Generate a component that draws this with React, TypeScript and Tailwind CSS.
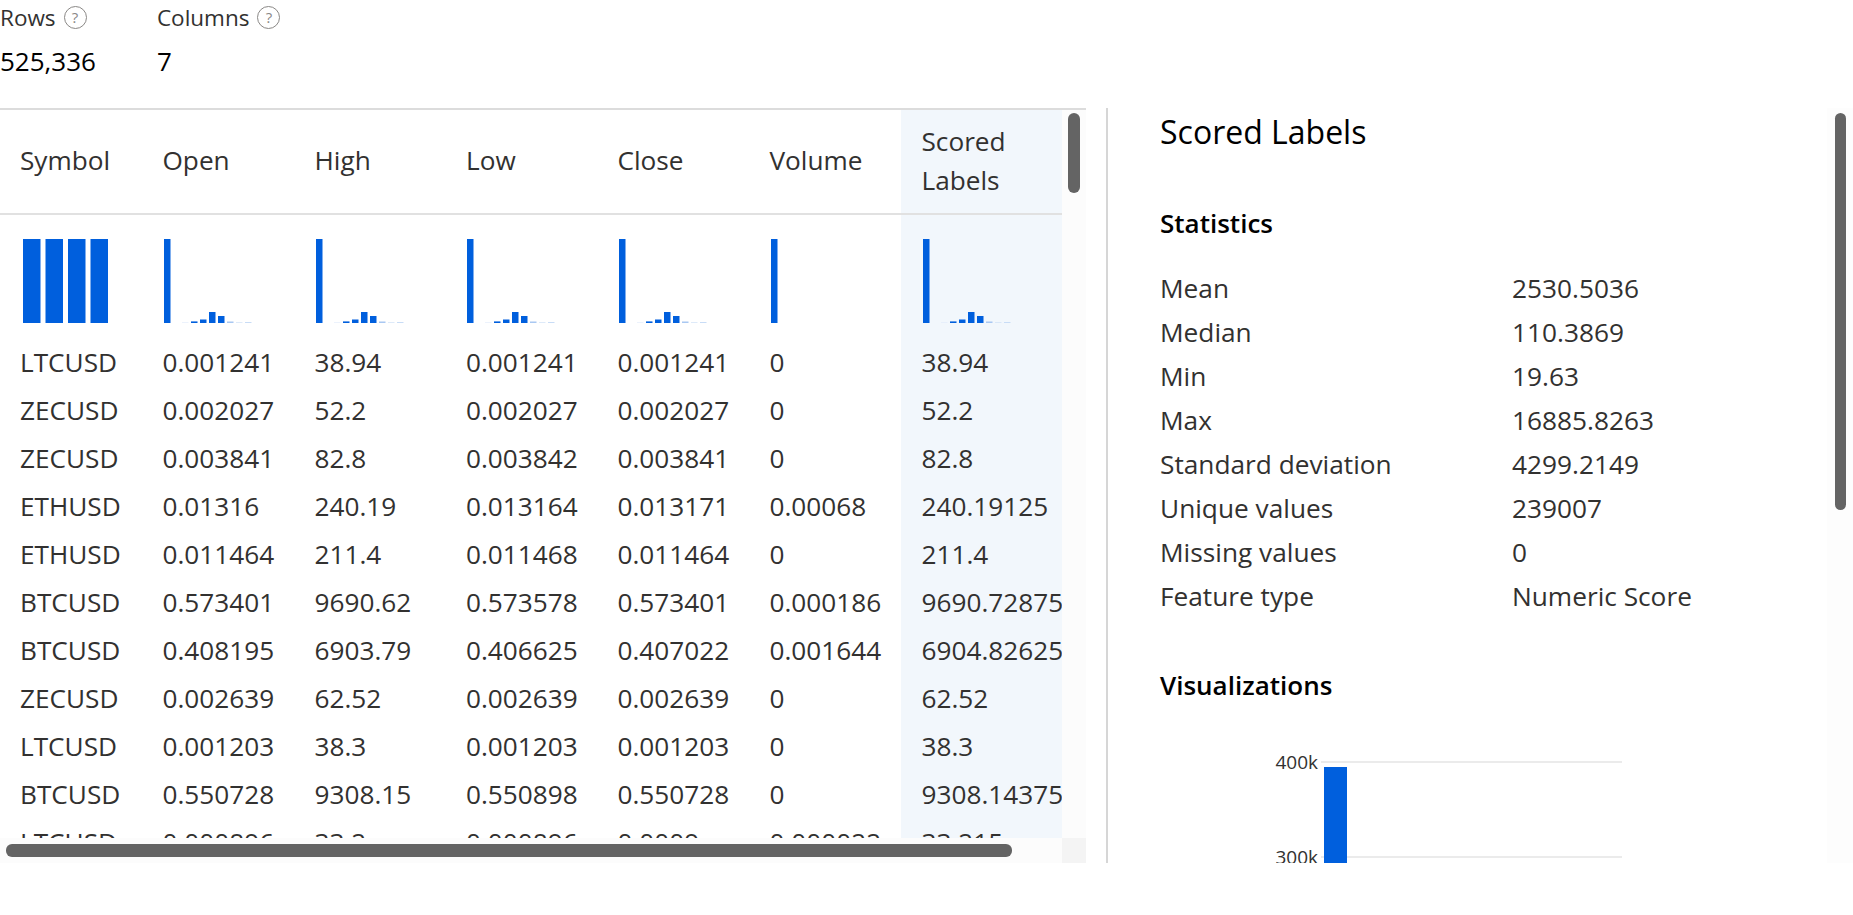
const font = "font-['Open_Sans','Noto_Sans',sans-serif]"

const rows = [
  ["LTCUSD", "0.001241", "38.94", "0.001241", "0.001241", "0", "38.94"],
  ["ZECUSD", "0.002027", "52.2", "0.002027", "0.002027", "0", "52.2"],
  ["ZECUSD", "0.003841", "82.8", "0.003842", "0.003841", "0", "82.8"],
  ["ETHUSD", "0.01316", "240.19", "0.013164", "0.013171", "0.00068", "240.19125"],
  ["ETHUSD", "0.011464", "211.4", "0.011468", "0.011464", "0", "211.4"],
  ["BTCUSD", "0.573401", "9690.62", "0.573578", "0.573401", "0.000186", "9690.72875"],
  ["BTCUSD", "0.408195", "6903.79", "0.406625", "0.407022", "0.001644", "6904.82625"],
  ["ZECUSD", "0.002639", "62.52", "0.002639", "0.002639", "0", "62.52"],
  ["LTCUSD", "0.001203", "38.3", "0.001203", "0.001203", "0", "38.3"],
  ["BTCUSD", "0.550728", "9308.15", "0.550898", "0.550728", "0", "9308.14375"],
  ["LTCUSD", "0.000896", "33.2", "0.000896", "0.0009", "0.000022", "33.215"],
]

const stats = [
  ["Mean", "2530.5036"],
  ["Median", "110.3869"],
  ["Min", "19.63"],
  ["Max", "16885.8263"],
  ["Standard deviation", "4299.2149"],
  ["Unique values", "239007"],
  ["Missing values", "0"],
  ["Feature type", "Numeric Score"],
]

const headers = ["Symbol", "Open", "High", "Low", "Close", "Volume"]
const gridCols = "grid grid-cols-[142.5px_152px_151.5px_151.5px_152px_151px_161.5px]"

function HelpIcon() {
  return (
    <span className="ml-2 flex h-[23px] w-[23px] items-center justify-center rounded-full border border-[#8a8886] text-[15px] leading-none text-[#8a8886]">
      ?
    </span>
  )
}

function Stat({ label, value }: { label: string; value: string }) {
  return (
    <div>
      <div className="flex h-[35px] items-center text-[22.5px] text-[#323130]">
        {label}
        <HelpIcon />
      </div>
      <div className="flex h-[52px] items-center pt-px text-[26px] text-black">{value}</div>
    </div>
  )
}

function Histogram({ kind }: { kind: "cat" | "num" | "vol" }) {
  const blue = "#005fdd"
  if (kind === "cat") {
    return (
      <svg width="100" height="84" className="block">
        {[0, 1, 2, 3].map((i) => (
          <rect key={i} x={3 + i * 22.5} y="0" width="17.5" height="84" fill={blue} />
        ))}
      </svg>
    )
  }
  const small = [
    [19, 0.6, "#dfeafa"],
    [28, 1.6, blue],
    [37, 3.5, blue],
    [46, 11, blue],
    [55, 7, blue],
    [64, 1.5, "#a9c8f2"],
    [73, 0.6, "#c8dcf6"],
    [82, 1, "#c8dcf6"],
  ] as const
  return (
    <svg width="110" height="84" className="block">
      <rect x="1" y="0" width="6.5" height="84" fill={blue} />
      {kind === "num" &&
        small.map(([x, h, c]) => <rect key={x} x={x} y={84 - h} width="6.5" height={h} fill={c} />)}
    </svg>
  )
}

function Chart() {
  return (
    <svg width="380" height="112" className="block">
      <line x1="75" x2="376" y1="9" y2="9" stroke="#ebebeb" strokeWidth="2" />
      <line x1="75" x2="376" y1="104" y2="104" stroke="#ebebeb" strokeWidth="2" />
      <rect x="78" y="14" width="23" height="98" fill="#005fdd" />
      <text x="72" y="16" textAnchor="end" fontSize="19" fill="#323130">400k</text>
      <text x="72" y="111" textAnchor="end" fontSize="19" fill="#323130">300k</text>
    </svg>
  )
}

export default function App() {
  return (
    <div className={`${font} h-[915px] w-[1853px] overflow-hidden bg-white`}>
      {/* Top counts */}
      <div className="flex h-[108px] gap-[61px]">
        <Stat label="Rows" value="525,336" />
        <Stat label="Columns" value="7" />
      </div>

      <div className="flex h-[755px]">
        {/* Table */}
        <div className="relative h-full w-[1086px] shrink-0 border-t-2 border-[#dcdcdc]">
          <div className="flex h-[728px]">
            <div className="h-full w-[1062px] shrink-0 overflow-hidden text-[26.2px] text-[#323130]">
              <div className={`${gridCols} h-[105px] border-b-2 border-[#e1e1e1]`}>
                {headers.map((h) => (
                  <div key={h} className="flex items-center pb-px pl-5">{h}</div>
                ))}
                <div className="flex items-center bg-[#f2f7fc] pb-px pl-[21px] pr-4 leading-[39px]">Scored Labels</div>
              </div>
              <div className={`${gridCols} h-[124px]`}>
                <div className="pl-5 pt-[24px]"><Histogram kind="cat" /></div>
                <div className="pl-5 pt-[24px]"><Histogram kind="num" /></div>
                <div className="pl-5 pt-[24px]"><Histogram kind="num" /></div>
                <div className="pl-5 pt-[24px]"><Histogram kind="num" /></div>
                <div className="pl-5 pt-[24px]"><Histogram kind="num" /></div>
                <div className="pl-5 pt-[24px]"><Histogram kind="vol" /></div>
                <div className="bg-[#f2f7fc] pl-[21px] pt-[24px]"><Histogram kind="num" /></div>
              </div>
              {rows.map((row, i) => (
                <div key={i} className={`${gridCols} h-[48px]`}>
                  {row.map((cell, j) => (
                    <div
                      key={j}
                      className={`flex items-center overflow-hidden whitespace-nowrap ${j === 6 ? "bg-[#f2f7fc] pl-[21px]" : "pl-5"}`}
                    >
                      {cell}
                    </div>
                  ))}
                </div>
              ))}
            </div>
            <div className="h-full flex-1 bg-[#fcfcfc]" />
          </div>
          <div className="flex h-[25px]">
            <div className="w-[1062px] bg-[#fcfcfc]" />
            <div className="flex-1 bg-[#f4f4f4]" />
          </div>
          {/* Scroll thumbs */}
          <div className="absolute left-[1068px] top-[3px] h-[80px] w-[12px] rounded-md bg-[#646464]" />
          <div className="absolute bottom-[6px] left-[6px] h-[13px] w-[1006px] rounded-md bg-[#646464]" />
        </div>

        {/* Detail panel */}
        <div className="ml-[20px] h-full w-[2px] shrink-0 bg-[#d6d6d6]" />
        <div className="relative h-full flex-1 overflow-hidden pl-[52px]">
          <h1 className="flex h-[48px] items-center text-[32px] text-black">Scored Labels</h1>
          <h2 className="mt-[50px] text-[26px] font-semibold leading-[34px] text-black">Statistics</h2>
          <div className="mt-[27px] text-[26.25px] text-[#323130]">
            {stats.map(([k, v]) => (
              <div key={k} className="flex h-[44px] items-center">
                <div className="w-[352px]">{k}</div>
                <div>{v}</div>
              </div>
            ))}
          </div>
          <h2 className="mt-[49px] text-[26px] font-semibold leading-[34px] text-black">Visualizations</h2>
          <div className="ml-[86px] mt-[51px]"><Chart /></div>
          <div className="absolute right-0 top-0 h-full w-[26px] bg-[#fdfdfd]" />
          <div className="absolute right-[7px] top-[5px] h-[397px] w-[11px] rounded-md bg-[#646464]" />
        </div>
      </div>
    </div>
  )
}
